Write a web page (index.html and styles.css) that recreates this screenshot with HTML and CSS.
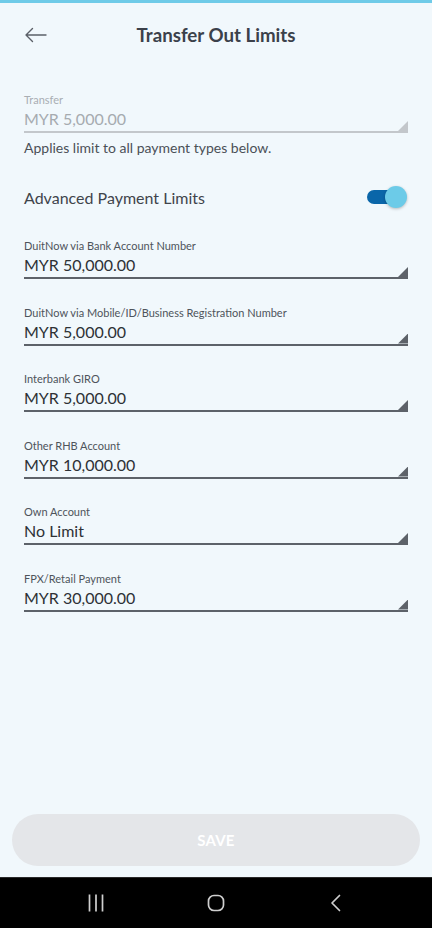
FILE: index.html
```html
<!DOCTYPE html>
<html lang="en">
<head>
<meta charset="utf-8">
<title>Transfer Out Limits</title>
<link rel="stylesheet" href="styles.css">
</head>
<body>
<div class="app">
  <div class="topline"></div>
  <header class="header">
    <button class="back" aria-label="Back">
      <svg width="24" height="16" viewBox="0 0 24 16"><path d="M2 8H22M2 8L8.5 1.5M2 8L8.5 14.5" fill="none" stroke="#5b6068" stroke-width="1.4" stroke-linecap="round"/></svg>
    </button>
    <h1 class="title">Transfer Out Limits</h1>
  </header>
  <main class="content">
    <div class="field field-disabled">
      <div class="field-label">Transfer</div>
      <div class="field-value">MYR 5,000.00</div>
      <span class="corner"></span>
    </div>
    <p class="hint">Applies limit to all payment types below.</p>
    <div class="toggle-row">
      <span class="toggle-label">Advanced Payment Limits</span>
      <span class="switch"><span class="track"></span><span class="knob"></span></span>
    </div>
    <div class="fields">
      <div class="field">
        <div class="field-label">DuitNow via Bank Account Number</div>
        <div class="field-value">MYR 50,000.00</div>
        <span class="corner"></span>
      </div>
      <div class="field">
        <div class="field-label">DuitNow via Mobile/ID/Business Registration Number</div>
        <div class="field-value">MYR 5,000.00</div>
        <span class="corner"></span>
      </div>
      <div class="field">
        <div class="field-label">Interbank GIRO</div>
        <div class="field-value">MYR 5,000.00</div>
        <span class="corner"></span>
      </div>
      <div class="field">
        <div class="field-label">Other RHB Account</div>
        <div class="field-value">MYR 10,000.00</div>
        <span class="corner"></span>
      </div>
      <div class="field">
        <div class="field-label">Own Account</div>
        <div class="field-value">No Limit</div>
        <span class="corner"></span>
      </div>
      <div class="field">
        <div class="field-label">FPX/Retail Payment</div>
        <div class="field-value">MYR 30,000.00</div>
        <span class="corner"></span>
      </div>
    </div>
  </main>
  <div class="footer">
    <button class="save" disabled>SAVE</button>
  </div>
  <nav class="navbar">
    <svg width="20" height="20" viewBox="0 0 20 20"><path d="M3.5 1.5V18.5M10 1.5V18.5M16.5 1.5V18.5" stroke="#cfcfcf" stroke-width="1.7"/></svg>
    <svg width="20" height="20" viewBox="0 0 20 20"><rect x="2.5" y="2.5" width="15" height="15" rx="5.5" fill="none" stroke="#cfcfcf" stroke-width="1.7"/></svg>
    <svg width="20" height="20" viewBox="0 0 20 20"><path d="M13.5 2.5L6 10L13.5 17.5" fill="none" stroke="#cfcfcf" stroke-width="1.7" stroke-linecap="round" stroke-linejoin="round"/></svg>
  </nav>
</div>
</body>
</html>
```

FILE: styles.css
```css
* { box-sizing: border-box; }
html, body { margin: 0; padding: 0; }
body {
  font-family: Lato, "Open Sans", sans-serif;
  background: #f1f8fc;
  color: #3a3f46;
}
.app {
  width: 432px;
  height: 928px;
  display: flex;
  flex-direction: column;
}
.topline { height: 3px; background: #6fcbe8; flex: none; }
.header {
  height: 64px;
  flex: none;
  display: flex;
  align-items: center;
  position: relative;
}
.back {
  position: absolute;
  left: 24px;
  top: 24px;
  border: 0;
  background: none;
  padding: 0;
  width: 24px;
  height: 16px;
  display: flex;
}
.title {
  margin: 0;
  width: 100%;
  text-align: center;
  font-size: 18.7px;
  font-weight: 700;
  color: #3b414a;
  line-height: 24px;
}
.content {
  flex: 1;
  padding: 26px 24px 0;
}
.field {
  position: relative;
  border-bottom: 2px solid #5d6269;
}
.field-label {
  font-size: 11px;
  line-height: 14px;
  color: #4e545b;
}
.field-value {
  font-size: 16px;
  line-height: 24px;
  color: #2d3136;
}
.corner {
  position: absolute;
  right: 0;
  bottom: 0;
  width: 10px;
  height: 10px;
  background: #5d6269;
  clip-path: polygon(100% 0, 100% 100%, 0 100%);
}
.field-disabled { border-bottom-color: #c3c7cb; }
.field-disabled .field-label { color: #a9aeb3; }
.field-disabled .field-value { color: #a6abb0; }
.field-disabled .corner { background: #c3c7cb; }
.hint {
  margin: 6px 0 0;
  font-size: 14px;
  line-height: 18px;
  color: #4b5057;
}
.toggle-row {
  margin-top: 28px;
  height: 24px;
  display: flex;
  align-items: center;
  justify-content: space-between;
}
.toggle-label {
  font-size: 16px;
  color: #3f444b;
}
.switch {
  position: relative;
  width: 40px;
  height: 22px;
  margin-right: 1px;
  display: flex;
  align-items: center;
}
.track {
  width: 30px;
  height: 14px;
  border-radius: 7px;
  background: #0a66a9;
}
.knob {
  position: absolute;
  right: 0;
  top: 0;
  width: 22px;
  height: 22px;
  border-radius: 50%;
  background: #6ccbe8;
  box-shadow: 0 1px 3px rgba(0,0,0,0.25);
}
.fields {
  margin-top: 30px;
  display: flex;
  flex-direction: column;
  gap: 26.5px;
}
.footer {
  flex: none;
  padding: 0 12px 11px;
}
.save {
  width: 100%;
  height: 52px;
  border: 0;
  border-radius: 26px;
  background: #e4e6e9;
  color: #ffffff;
  font-family: Lato, "Open Sans", sans-serif;
  font-size: 15px;
  font-weight: 700;
  letter-spacing: 0.2px;
}
.navbar {
  flex: none;
  height: 51px;
  background: #000;
  border-top: 1px solid #2a2a2a;
  display: flex;
  align-items: center;
  justify-content: space-around;
  padding: 0 36px;
}
```
